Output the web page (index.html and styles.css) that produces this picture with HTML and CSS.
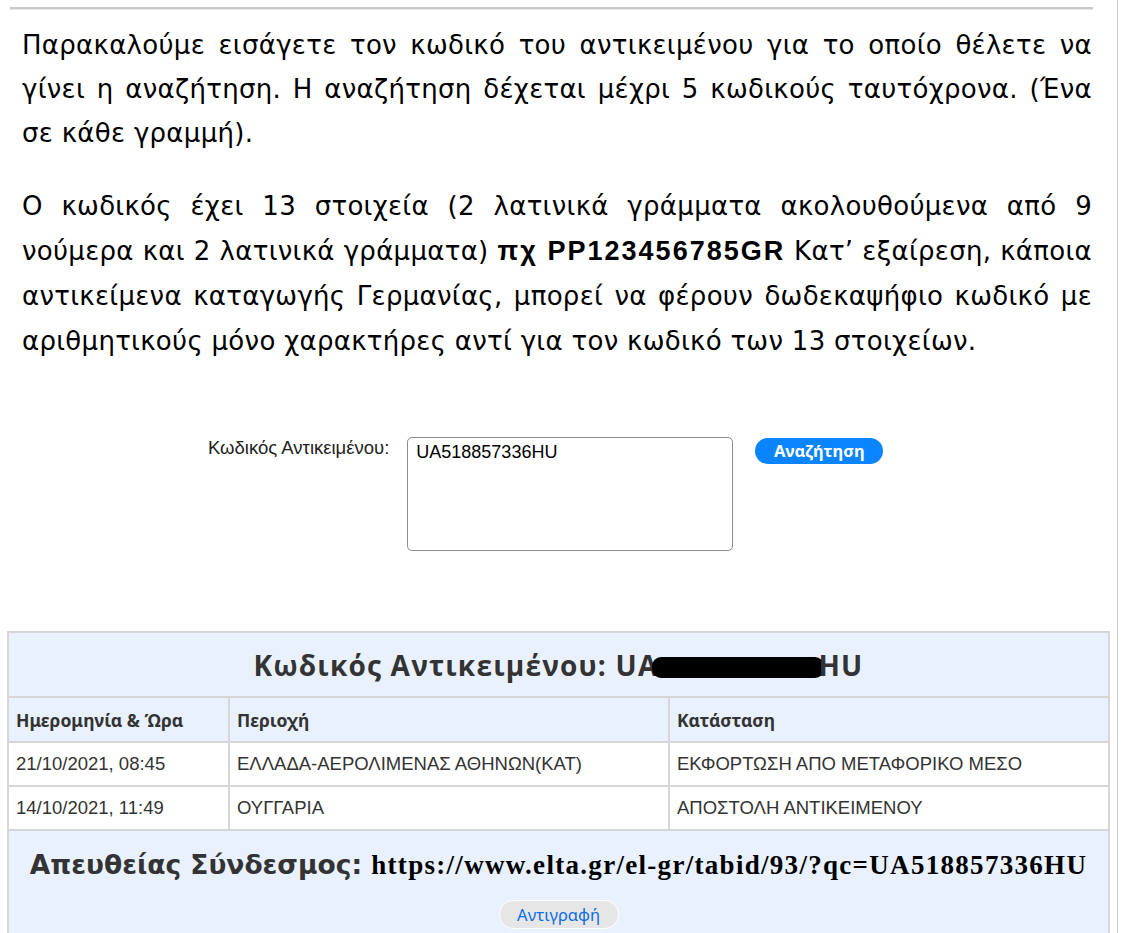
FILE: index.html
```html
<!DOCTYPE html>
<html>
<head>
<meta charset="UTF-8">
<title>ΕΛΤΑ - Αναζήτηση αντικειμένου</title>
<meta name="viewport" content="width=device-width, initial-scale=1.0">
<link rel="stylesheet" href="styles.css">
</head>
<body>
	<div class="page">
		<div class="top-rule"></div>

		<div class="intro">
			<p>Παρακαλούμε εισάγετε τον κωδικό του αντικειμένου για το οποίο θέλετε να γίνει η αναζήτηση. Η αναζήτηση δέχεται μέχρι 5 κωδικούς ταυτόχρονα. (Ένα σε κάθε γραμμή).</p>
			<p class="second">Ο κωδικός έχει 13 στοιχεία (2 λατινικά γράμματα ακολουθούμενα από 9 νούμερα και 2 λατινικά γράμματα) <b>πχ PP123456785GR</b> Κατ’ εξαίρεση, κάποια αντικείμενα καταγωγής Γερμανίας, μπορεί να φέρουν δωδεκαψήφιο κωδικό με αριθμητικούς μόνο χαρακτήρες αντί για τον κωδικό των 13 στοιχείων.</p>
		</div>

		<form action="#" class="search">
			<label for="codes">Κωδικός Αντικειμένου:</label>
			<textarea id="codes" name="codes">UA518857336HU</textarea>
			<button type="submit" class="search-btn">Αναζήτηση</button>
		</form>

		<table class="results">
			<colgroup>
				<col class="c1">
				<col class="c2">
				<col class="c3">
			</colgroup>
			<tr>
				<th colspan="3" class="title">Κωδικός Αντικειμένου: UA<span class="redact"></span>HU</th>
			</tr>
			<tr class="head">
				<th>Ημερομηνία &amp; Ώρα</th>
				<th>Περιοχή</th>
				<th>Κατάσταση</th>
			</tr>
			<tr class="row">
				<td>21/10/2021, 08:45</td>
				<td>ΕΛΛΑΔΑ-ΑΕΡΟΛΙΜΕΝΑΣ ΑΘΗΝΩΝ(ΚΑΤ)</td>
				<td>ΕΚΦΟΡΤΩΣΗ ΑΠΟ ΜΕΤΑΦΟΡΙΚΟ ΜΕΣΟ</td>
			</tr>
			<tr class="row">
				<td>14/10/2021, 11:49</td>
				<td>ΟΥΓΓΑΡΙΑ</td>
				<td>ΑΠΟΣΤΟΛΗ ΑΝΤΙΚΕΙΜΕΝΟΥ</td>
			</tr>
			<tr>
				<td colspan="3" class="link-cell">
					<div class="link-line">Απευθείας Σύνδεσμος: <span class="url">https://www.elta.gr/el-gr/tabid/93/?qc=UA518857336HU</span></div>
					<button type="button" class="copy-btn">Αντιγραφή</button>
				</td>
			</tr>
		</table>
	</div>
</body>
</html>
```

FILE: styles.css
```css
body {
	margin: 0;
	background: #fff;
	font-family: "Liberation Sans", Arial, sans-serif;
	color: #000;
}

.page {
	width: 1118px;
	height: 933px;
	overflow: hidden;
	border-right: 1px solid #c8c8c8;
	box-sizing: border-box;
	padding-top: 7px;
}

.top-rule {
	margin-left: 10px;
	width: 1083px;
	height: 2px;
	background: #c9c9c9;
	border-bottom: 1px solid #e6e6e6;
}

.intro {
	padding: 0 25px 0 22px;
}

.intro p {
	margin: 13px 0 0;
	font-family: "DejaVu Sans", "Liberation Sans", sans-serif;
	font-size: 26px;
	letter-spacing: 0.3px;
	line-height: 44px;
	text-align: justify;
}

.intro p.second {
	margin-top: 29px;
	line-height: 45px;
}

.intro b {
	font-family: "Liberation Sans", Arial, sans-serif;
	font-size: 27px;
	letter-spacing: 2px;
}

.search {
	display: flex;
	align-items: flex-start;
	margin: 73px 0 0 208px;
}

.search label {
	font-size: 18.5px;
	color: #222;
	margin-right: 18px;
}

.search textarea {
	width: 326px;
	height: 114px;
	box-sizing: border-box;
	border: 1px solid #8e8e8e;
	border-radius: 5px;
	padding: 4px 8px;
	font-family: "Liberation Sans", Arial, sans-serif;
	font-size: 18px;
	color: #000;
	resize: none;
}

.search-btn {
	margin-left: 22px;
	margin-top: 1px;
	width: 128px;
	height: 26px;
	border: none;
	border-radius: 13px;
	background: #0a84ff;
	color: #fff;
	font-family: "Noto Sans", "Liberation Sans", sans-serif;
	font-weight: bold;
	font-size: 16.5px;
	line-height: 26px;
	padding: 0;
}

.results {
	margin: 80px 0 0 7px;
	width: 1101px;
	table-layout: fixed;
	border-collapse: collapse;
	border: 2px solid #d6d6d6;
}

.results .c1 {
	width: 221px;
}

.results .c2,
.results .c3 {
	width: 440px;
}

.results th,
.results td {
	border: 2px solid #d6d6d6;
	text-align: left;
	padding: 0 7px;
	color: #333;
	white-space: nowrap;
}

.results th {
	background: #e8f1fd;
	font-weight: bold;
}

.results .title {
	text-align: center;
	font-family: "Open Sans", "Liberation Sans", sans-serif;
	font-size: 28px;
	letter-spacing: 1.2px;
	height: 63px;
	color: #333;
}

.redact {
	display: inline-block;
	width: 172px;
	height: 21px;
	background: #000;
	border-radius: 9px;
	vertical-align: -2px;
	margin: 0 -6px 0 -6px;
}

.results .head th {
	height: 43px;
	font-family: "Noto Sans", "Liberation Sans", sans-serif;
	font-size: 17.5px;
}

.results .row td {
	height: 42px;
	font-size: 18.5px;
}

.results .link-cell {
	background: #e8f1fd;
	text-align: center;
	padding: 17px 7px 10px;
}

.link-line {
	font-family: "DejaVu Sans", "Liberation Sans", sans-serif;
	font-weight: bold;
	font-size: 26.5px;
	color: #333;
	line-height: 34px;
}

.url {
	font-family: "Liberation Serif", "Times New Roman", serif;
	font-size: 27px;
	letter-spacing: 1.3px;
	color: #000;
}

.copy-btn {
	margin-top: 18px;
	width: 120px;
	height: 29px;
	border: 1px solid #fff;
	border-radius: 14px;
	background: #e6e6e6;
	color: #0a6ee6;
	font-family: "Noto Sans", "Liberation Sans", sans-serif;
	font-size: 16.5px;
	padding: 0;
}
```
